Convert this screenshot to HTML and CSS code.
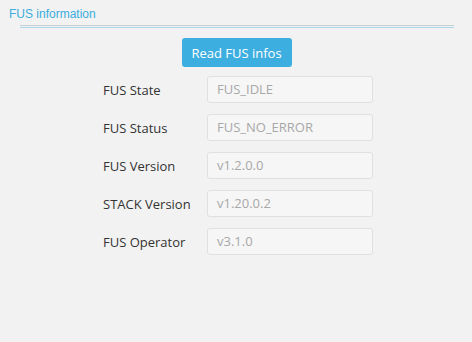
FILE: index.html
```html
<!DOCTYPE html>
<html>
<head>
<meta charset="utf-8">
<link rel="stylesheet" href="styles.css">
</head>
<body>
<div class="panel">
  <div class="title">FUS information</div>
  <div class="rule"></div>
  <div class="actions"><button class="btn">Read FUS infos</button></div>
  <div class="form">
    <div class="label">FUS State</div><div class="field">FUS_IDLE</div>
    <div class="label">FUS Status</div><div class="field">FUS_NO_ERROR</div>
    <div class="label">FUS Version</div><div class="field">v1.2.0.0</div>
    <div class="label">STACK Version</div><div class="field">v1.20.0.2</div>
    <div class="label">FUS Operator</div><div class="field">v3.1.0</div>
  </div>
</div>
</body>
</html>
```
FILE: styles.css
```css
html, body {
  margin: 0;
  padding: 0;
  background: #f2f2f2;
}
.panel {
  width: 472px;
  height: 342px;
  font-family: "Open Sans", sans-serif;
}
.title {
  font-family: "Liberation Sans", Arial, sans-serif;
  font-size: 12px;
  color: #3badde;
  padding: 7px 0 0 9px;
  height: 18px;
  line-height: 15px;
}
.rule {
  margin: 0 18px 0 20px;
  height: 1px;
  border-top: 1px solid #c5d0d5;
  border-bottom: 1px solid #a8d8ea;
}
.actions {
  display: flex;
  justify-content: center;
  padding-top: 10px;
  padding-left: 1px;
}
.btn {
  width: 110px;
  height: 29px;
  border: none;
  border-radius: 3px;
  background: #3daee0;
  color: #fff;
  font-family: "Open Sans", sans-serif;
  font-size: 13px;
  padding: 0;
}
.form {
  display: grid;
  grid-template-columns: 104px 166px;
  row-gap: 11px;
  padding: 9px 0 0 103px;
  align-items: center;
}
.label {
  font-size: 13px;
  color: #333;
}
.field {
  box-sizing: border-box;
  height: 27px;
  border: 1px solid #e0e0e0;
  border-radius: 3px;
  background: #f6f6f6;
  color: #a8a8a8;
  font-size: 13px;
  line-height: 25px;
  padding-left: 9px;
}
```
